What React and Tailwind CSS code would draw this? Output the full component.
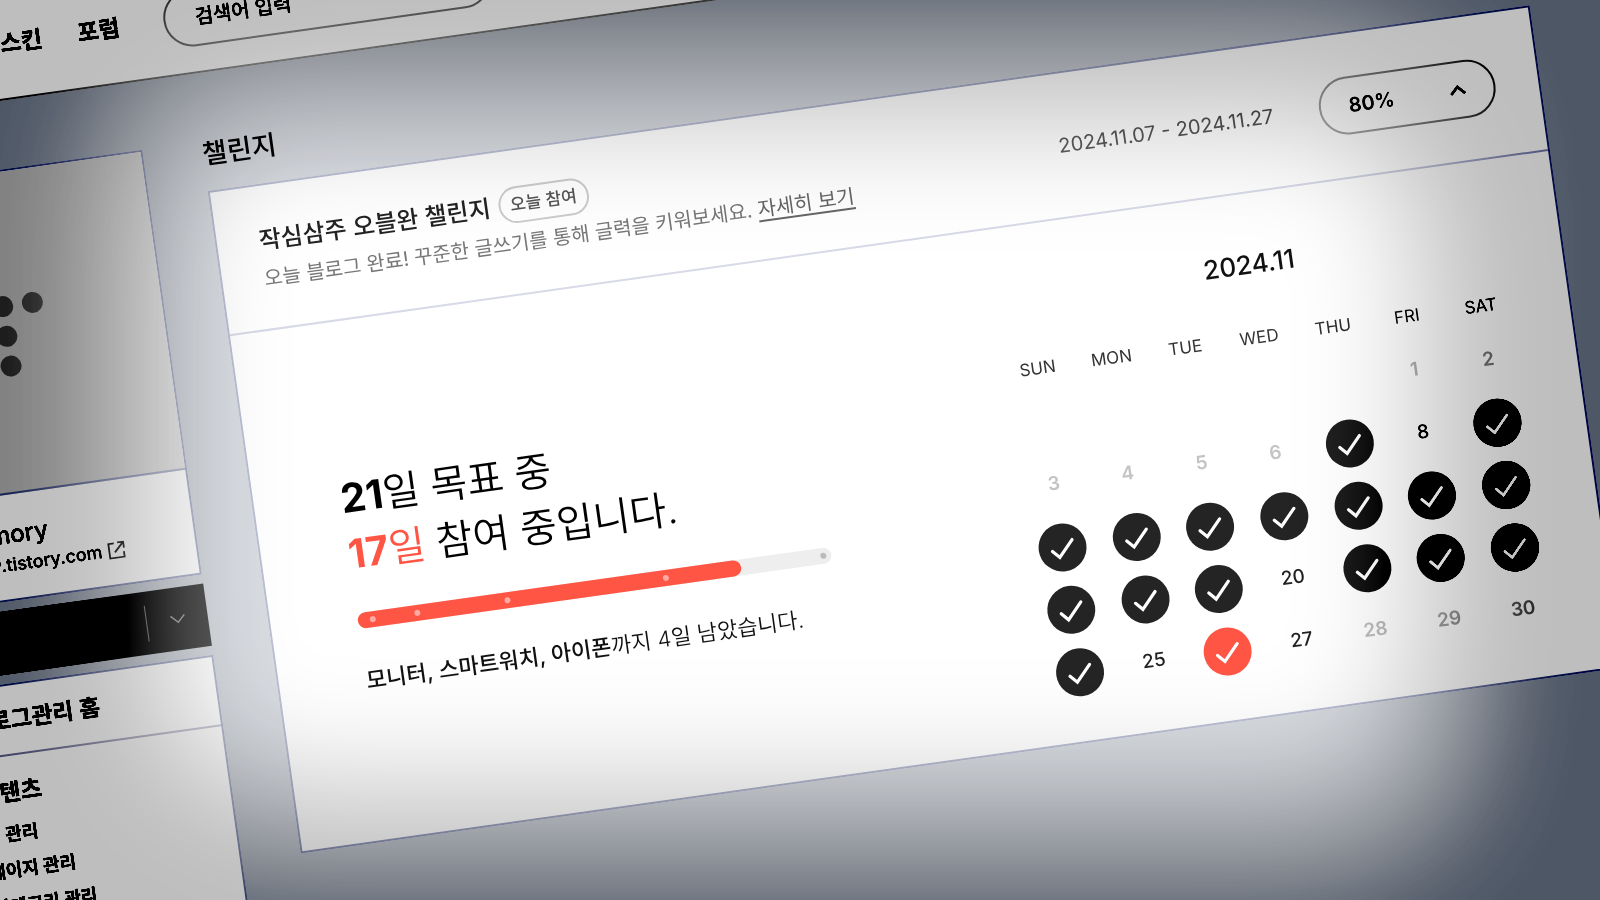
import React from "react";

const navLinks = ["스킨", "포럼"];
const menuLinks = ["글 관리", "페이지 관리", "카테고리 관리"];
const weekdays = ["SUN", "MON", "TUE", "WED", "THU", "FRI", "SAT"];

const goal = 21;
const joined = 17;
const rewardDays = [1, 3, 7, 14, 21];

// challenge runs from the 7th to the 27th
const firstDay = 7;
const lastDay = 27;
const today = 26;
const missed = [8, 20, 25, 27];

// November 2024 starts on a friday
const weeks = [
  [null, null, null, null, null, 1, 2],
  [3, 4, 5, 6, 7, 8, 9],
  [10, 11, 12, 13, 14, 15, 16],
  [17, 18, 19, 20, 21, 22, 23],
  [24, 25, 26, 27, 28, 29, 30],
];

const Chevron = ({ className, up, strokeWidth = 2 }) => (
  <svg viewBox="0 0 16 10" fill="none" stroke="currentColor" strokeWidth={strokeWidth} className={className}>
    <path d={up ? "M1 9l7-7 7 7" : "M1 1l7 7 7-7"} />
  </svg>
);

const TopBar = () => (
  <header className="flex items-center border-b-2 border-[#bbb] bg-white pt-[15px] pb-[25px] pl-[234px]">
    <nav className="flex gap-9">
      {navLinks.map((link) => (
        <a key={link} href="#" className="text-[23px] font-bold text-black">
          {link}
        </a>
      ))}
    </nav>
    <input
      type="search"
      aria-label="검색어 입력"
      placeholder="검색어 입력"
      className="ml-11 h-[58px] w-[330px] rounded-full border-2 border-[#c4c4c4] px-[30px] text-xl font-medium text-[#333] outline-none placeholder:text-[#333]"
    />
  </header>
);

const Sidebar = () => (
  <aside className="w-80 shrink-0">
    <section className="border-2 border-[#bcc0d4] bg-white">
      <div className="flex h-[321px] items-center justify-center border-b-2 border-[#c4c8da] bg-[#eaeaea]">
        <svg viewBox="0 0 84 84" className="mt-2 size-[84px] fill-[#c6c6c6]">
          <circle cx="12" cy="12" r="10.5" />
          <circle cx="42" cy="12" r="10.5" />
          <circle cx="72" cy="12" r="10.5" />
          <circle cx="42" cy="42" r="10.5" />
          <circle cx="42" cy="72" r="10.5" />
        </svg>
      </div>
      <div className="pt-6 pb-5 pl-[50px]">
        <strong className="block text-2xl leading-8 font-medium text-black">in memory</strong>
        <a href="#" className="flex items-center gap-1.5 text-lg leading-7 font-medium text-[#222]">
          memory.tistory.com
          <svg viewBox="0 0 18 18" fill="none" stroke="currentColor" strokeWidth="1.8" className="size-[18px] text-[#888]">
            <path d="M7 2H1.500v14.500H16V11M10.500 1.500H16.500V7.500M16.500 1.500L7 11" />
          </svg>
        </a>
      </div>
    </section>

    <div className="mt-[9px] flex h-[63px] items-center bg-[#606060]">
      <button type="button" className="flex-1 pl-10 text-left text-lg text-white">
        글쓰기
      </button>
      <button
        type="button"
        aria-label="더보기"
        className="flex h-9 w-[62px] items-center justify-center border-l border-[#aaa] text-[#b4b4b4]"
      >
        <Chevron className="h-2.5 w-4" strokeWidth={1.5} />
      </button>
    </div>

    <nav className="mt-[9px] border-2 border-[#bcc0d4] bg-white pb-20">
      <a
        href="#"
        className="block border-b-2 border-[#d4d4e0] py-[18px] pl-[66px] text-[23px] leading-8 font-semibold text-[#111]"
      >
        블로그관리 홈
      </a>
      <h2 className="pt-5 pl-[66px] text-[23px] leading-8 font-semibold text-[#111]">콘텐츠</h2>
      <ul className="mt-2 pl-[66px]">
        {menuLinks.map((link) => (
          <li key={link}>
            <a href="#" className="text-lg leading-9 font-semibold text-[#222]">
              {link}
            </a>
          </li>
        ))}
      </ul>
    </nav>
  </aside>
);

const ChallengeHeader = () => (
  <div className="flex h-[145px] items-center border-b-2 border-[#d8dae8] pr-[43px] pl-[42px]">
    <div>
      <div className="flex items-center gap-2">
        <h2 className="text-2xl font-medium text-[#222]">작심삼주 오블완 챌린지</h2>
        <span className="flex h-[37px] items-center rounded-full border-2 border-[#ccc] px-2.5 text-[17px] font-medium text-[#555]">
          오늘 참여
        </span>
      </div>
      <p className="mt-1.5 text-xl leading-7 text-[#777]">
        오늘 블로그 완료! 꾸준한 글쓰기를 통해 글력을 키워보세요.{" "}
        <a href="#" className="text-[#666] underline underline-offset-4">
          자세히 보기
        </a>
      </p>
    </div>
    <span className="ml-auto text-xl text-[#666]">2024.11.07 - 2024.11.27</span>
    <button
      type="button"
      className="ml-[46px] flex h-[58px] w-[178px] items-center justify-between rounded-full border-2 border-[#b4b4b4] px-7 text-xl font-semibold text-[#222]"
    >
      80%
      <Chevron up className="h-2.5 w-4" strokeWidth={2.5} />
    </button>
  </div>
);

const Progress = () => (
  <div className="w-[478px] pb-3">
    <p className="text-[40px] leading-[56px] font-[350] text-black">
      <b className="font-bold">{goal}</b>일 목표 중
      <br />
      <span className="text-[#ff5544]">
        <b className="font-bold">{joined}</b>일
      </span>{" "}
      참여 중입니다.
    </p>
    <div className="relative mt-[31px] h-4 rounded-full bg-[#eee]">
      <div
        className="h-full rounded-full bg-[#ff5544]"
        style={{ width: `${(joined / goal) * 100}%` }}
      />
      {rewardDays.map((day) => (
        <i
          key={day}
          className={`absolute top-[5px] -ml-[11px] size-1.5 rounded-full ${
            day <= joined ? "bg-[#ffaaa2]" : "bg-[#bbb]"
          }`}
          style={{ left: `${(day / goal) * 100}%` }}
        />
      ))}
    </div>
    <p className="mt-9 text-[22px] leading-8 font-[350] whitespace-nowrap text-[#111]">
      <b className="font-medium">모니터, 스마트워치, 아이폰</b>까지 4일 남았습니다.
    </p>
  </div>
);

const Day = ({ day }) => {
  if (!day) return null;
  if (day < firstDay || day > lastDay) {
    return <span className="font-semibold text-[#c4c4c4]">{day}</span>;
  }
  if (missed.includes(day)) return <span className="text-[#222]">{day}</span>;
  return (
    <span
      className={`mx-auto flex size-12 items-center justify-center rounded-full text-white ${
        day === today ? "bg-[#ff5544]" : "bg-[#242424]"
      }`}
    >
      <svg
        viewBox="-24 -24 48 48"
        fill="none"
        stroke="currentColor"
        strokeWidth="3.2"
        strokeLinecap="round"
        role="img"
        aria-label={`${day}`}
        className="size-12"
      >
        <path d="M-10.500 2.500L-4 9.500L10.500-6.500" />
      </svg>
    </span>
  );
};

const Calendar = () => (
  <div className="w-[522px]">
    <h3 className="text-center text-[26px] leading-8 font-medium text-[#111]">2024.11</h3>
    <table className="mt-9 w-full table-fixed text-center">
      <thead>
        <tr className="h-11">
          {weekdays.map((name) => (
            <th key={name} className="p-0 text-[17px] font-normal text-[#333]">
              {name}
            </th>
          ))}
        </tr>
      </thead>
      <tbody>
        {weeks.map((week, i) => (
          <tr key={i} className="h-[63px]">
            {week.map((day, j) => (
              <td key={j} className="p-0 text-[19px] font-medium">
                <Day day={day} />
              </td>
            ))}
          </tr>
        ))}
      </tbody>
    </table>
  </div>
);

// Darkens the edges: burn deepens the tints, multiply dims the white
const Vignette = () => (
  <>
    <div className="pointer-events-none absolute inset-0 overflow-hidden bg-[#404040] mix-blend-color-burn">
      <div className="absolute top-[7%] right-[10%] bottom-[7%] left-[8%] rounded-[120px] bg-white blur-[64px]" />
    </div>
    <div className="pointer-events-none absolute inset-0 overflow-hidden bg-[#bebebe] mix-blend-multiply">
      <div className="absolute top-[13%] right-[11%] bottom-[12%] left-[10%] rounded-[120px] bg-white blur-[64px]" />
    </div>
  </>
);

const App = () => {
  return (
    <div className="relative isolate h-screen overflow-hidden bg-[#d9dce1] font-['Inter','Noto_Sans_CJK_KR',sans-serif]">
      <div className="-ml-60 origin-[240px_0] -rotate-8">
        <TopBar />
        <main className="flex gap-[59px] pt-[68px] pr-[86px] pl-10">
          <Sidebar />
          <div className="min-w-0 flex-1">
            <h1 className="mb-[22px] text-[27px] leading-7 font-medium text-[#111]">챌린지</h1>
            <section className="border-2 border-[#bcc0d4] bg-white">
              <ChallengeHeader />
              <div className="flex items-center justify-between pt-[55px] pr-[51px] pb-[38px] pl-[87px]">
                <Progress />
                <Calendar />
              </div>
            </section>
          </div>
        </main>
      </div>
      <Vignette />
    </div>
  );
};

export default App;
